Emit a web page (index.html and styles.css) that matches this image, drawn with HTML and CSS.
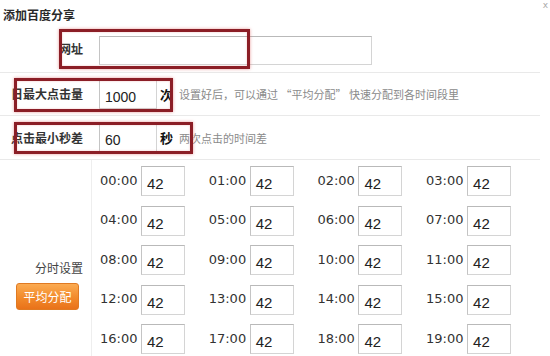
FILE: index.html
```html
<!DOCTYPE html>
<html>
<head>
<meta charset="utf-8">
<link rel="stylesheet" href="styles.css">
</head>
<body>
<div class="dialog">
  <div class="title">添加百度分享</div>
  <span class="close">x</span>
  <div class="row row-url">
    <div class="label">网址</div>
    <div class="field"><div class="box box-url"></div></div>
  </div>
  <div class="row row-max">
    <div class="label">日最大点击量</div>
    <div class="field">
      <div class="box box-num">1000</div>
      <span class="unit">次</span>
      <span class="hint">设置好后，可以通过 “平均分配” 快速分配到各时间段里</span>
    </div>
  </div>
  <div class="row row-min">
    <div class="label">点击最小秒差</div>
    <div class="field">
      <div class="box box-num">60</div>
      <span class="unit">秒</span>
      <span class="hint">两次点击的时间差</span>
    </div>
  </div>
  <div class="hours">
    <div class="hours-side">
      <div class="side-label">分时设置</div>
      <div class="btn">平均分配</div>
    </div>
    <div class="grid">
      <div class="cell"><span class="time">00:00</span><div class="box box-h">42</div></div>
      <div class="cell"><span class="time">01:00</span><div class="box box-h">42</div></div>
      <div class="cell"><span class="time">02:00</span><div class="box box-h">42</div></div>
      <div class="cell"><span class="time">03:00</span><div class="box box-h">42</div></div>
      <div class="cell"><span class="time">04:00</span><div class="box box-h">42</div></div>
      <div class="cell"><span class="time">05:00</span><div class="box box-h">42</div></div>
      <div class="cell"><span class="time">06:00</span><div class="box box-h">42</div></div>
      <div class="cell"><span class="time">07:00</span><div class="box box-h">42</div></div>
      <div class="cell"><span class="time">08:00</span><div class="box box-h">42</div></div>
      <div class="cell"><span class="time">09:00</span><div class="box box-h">42</div></div>
      <div class="cell"><span class="time">10:00</span><div class="box box-h">42</div></div>
      <div class="cell"><span class="time">11:00</span><div class="box box-h">42</div></div>
      <div class="cell"><span class="time">12:00</span><div class="box box-h">42</div></div>
      <div class="cell"><span class="time">13:00</span><div class="box box-h">42</div></div>
      <div class="cell"><span class="time">14:00</span><div class="box box-h">42</div></div>
      <div class="cell"><span class="time">15:00</span><div class="box box-h">42</div></div>
      <div class="cell"><span class="time">16:00</span><div class="box box-h">42</div></div>
      <div class="cell"><span class="time">17:00</span><div class="box box-h">42</div></div>
      <div class="cell"><span class="time">18:00</span><div class="box box-h">42</div></div>
      <div class="cell"><span class="time">19:00</span><div class="box box-h">42</div></div>
    </div>
  </div>
  <div class="mark mark-1"></div>
  <div class="mark mark-2"></div>
  <div class="mark mark-3"></div>
</div>
</body>
</html>
```

FILE: styles.css
```css
html, body {
  margin: 0;
  padding: 0;
  background: #fff;
}
body {
  width: 550px;
  height: 356px;
  overflow: hidden;
  font-family: "Noto Sans CJK SC", "DejaVu Sans", sans-serif;
  color: #333;
}
.dialog {
  position: relative;
  width: 550px;
  height: 356px;
}
.title {
  font-size: 12px;
  font-weight: bold;
  line-height: 16px;
  padding: 7px 0 0 3px;
  height: 19px;
  color: #2a2a2a;
}
.close {
  position: absolute;
  right: 2px;
  top: 1px;
  font-family: "DejaVu Sans", sans-serif;
  font-size: 9px;
  line-height: 9px;
  color: #aaa;
}
.row {
  display: flex;
  align-items: center;
  width: 540px;
  border-bottom: 1px solid #e9e9e9;
}
.row-url { height: 46px; }
.row-max { height: 42px; }
.row-min { height: 43px; }
.label {
  width: 83px;
  padding-right: 9px;
  text-align: right;
  font-size: 12px;
  font-weight: bold;
  color: #333;
  line-height: 16px;
}
.field {
  display: flex;
  align-items: center;
  padding-left: 7px;
}
.box {
  box-sizing: border-box;
  border: 1px solid #d4d4d4;
  border-top-color: #b9b9b9;
  border-left-color: #c4c4c4;
  background: #fff;
  font-family: "Liberation Sans", Arial, sans-serif;
  color: #222;
  display: flex;
  align-items: center;
}
.box-url {
  width: 273px;
  height: 29px;
  margin-top: 3px;
}
.box-num {
  width: 58px;
  height: 30px;
  padding: 5px 0 0 5px;
  font-size: 14px;
}
.unit {
  font-size: 13px;
  font-weight: bold;
  color: #111;
  margin-left: 3px;
  margin-right: 6px;
}
.hint {
  font-size: 11px;
  color: #8a8a8a;
  white-space: nowrap;
}
.hours {
  display: flex;
}
.hours-side {
  width: 91px;
  height: 196px;
  border-right: 1px solid #eee;
}
.side-label {
  font-size: 12px;
  color: #444;
  text-align: right;
  padding-right: 8px;
  line-height: 16px;
  margin-top: 100px;
}
.btn {
  margin: 7px 0 0 16px;
  width: 63px;
  height: 27px;
  box-sizing: border-box;
  border-radius: 3px;
  border: 1px solid #e07a22;
  background: linear-gradient(#fbab52, #f28a2a 55%, #e9721a);
  color: #fff;
  font-size: 12px;
  line-height: 25px;
  text-align: center;
}
.grid {
  display: grid;
  grid-template-columns: repeat(4, 85px);
  grid-auto-rows: 30px;
  column-gap: 23.7px;
  row-gap: 9.5px;
  padding: 6px 0 0 8px;
}
.cell {
  display: flex;
  align-items: center;
}
.time {
  width: 41px;
  font-family: "DejaVu Sans", Verdana, sans-serif;
  font-size: 13px;
  color: #333;
  padding-bottom: 2px;
}
.box-h {
  width: 44px;
  height: 30px;
  font-size: 15px;
  padding: 5px 0 0 5px;
}
.mark {
  position: absolute;
  box-sizing: border-box;
  border: 3px solid #8b1e26;
  box-shadow: 0 0 3px rgba(220, 90, 90, 0.6), inset 0 0 2px rgba(220, 90, 90, 0.4);
}
.mark-1 { left: 59px; top: 29px; width: 191px; height: 40px; }
.mark-2 { left: 14px; top: 78px; width: 159px; height: 34px; }
.mark-3 { left: 14px; top: 122px; width: 179px; height: 32px; }
```
